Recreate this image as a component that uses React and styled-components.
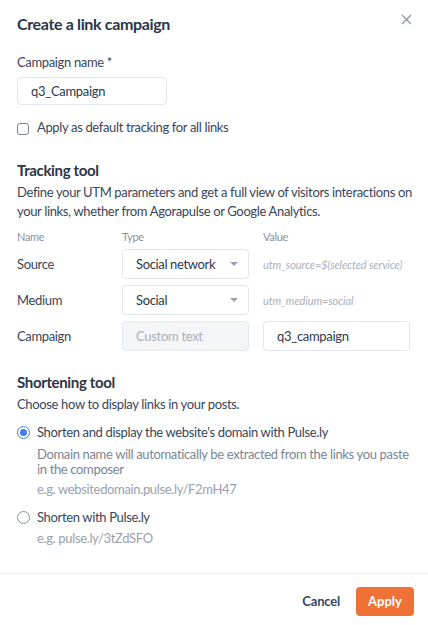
import React, { useState } from "react";
import styled, { createGlobalStyle } from "styled-components";

const GlobalStyle = createGlobalStyle`
  * { box-sizing: border-box; }
  body {
    margin: 0;
    background: #ffffff;
    font-family: Lato, "Open Sans", sans-serif;
    color: #3a4559;
    letter-spacing: -0.35px;
  }
`;

const Modal = styled.div`
  width: 428px;
  height: 625px;
  background: #fff;
  display: flex;
  flex-direction: column;
`;

const Body = styled.div`
  height: 573px;
  padding: 14px 6px 0 17px;
  display: flex;
  flex-direction: column;
`;

const HeaderRow = styled.div`
  display: flex;
  justify-content: space-between;
  align-items: flex-start;
`;

const Title = styled.h2`
  margin: 0;
  font-size: 16px;
  line-height: 20px;
  font-weight: 700;
  color: #2b3548;
`;

const CloseButton = styled.button`
  border: none;
  background: none;
  padding: 0;
  margin: 0 9px 0 0;
  width: 12px;
  height: 12px;
  cursor: pointer;
  display: flex;
`;

const Label = styled.label`
  display: block;
  font-size: 13px;
  line-height: 16px;
  color: #3a4559;
  margin: 20px 0 7px;
`;

const TextInput = styled.input`
  width: ${(p) => p.$width || "150px"};
  height: ${(p) => p.$height || "28px"};
  padding: 0 13px;
  border: 1px solid #e3e6eb;
  border-radius: 4px;
  font-family: inherit;
  font-size: 13px;
  letter-spacing: -0.3px;
  color: #2e384b;
  background: ${(p) => (p.disabled ? "#f4f5f7" : "#fff")};
  outline: none;

  &::placeholder {
    color: #a9afba;
  }
`;

const CheckRow = styled.label`
  display: flex;
  align-items: center;
  gap: 8px;
  font-size: 13px;
  line-height: 16px;
  margin-top: 14px;
`;

const Box = styled.span`
  width: 12px;
  height: 12px;
  border: 1px solid #7b8494;
  border-radius: 3px;
  margin-top: 3px;
`;

const SectionTitle = styled.h3`
  margin: ${(p) => p.$top || "26px"} 0 4px;
  font-size: 15px;
  line-height: 18px;
  font-weight: 700;
  color: #2b3548;
`;

const Text = styled.p`
  margin: 0;
  font-size: 13px;
  line-height: 19px;
  color: #3a4559;
`;

const Grid = styled.div`
  display: grid;
  grid-template-columns: 105px 141px 1fr;
  align-items: center;
  row-gap: 6px;
  margin-top: 9px;
`;

const ColHead = styled.div`
  font-size: 11px;
  line-height: 13px;
  color: #8a92a0;
`;

const RowName = styled.div`
  font-size: 13px;
  color: #3a4559;
`;

const Select = styled.div`
  width: 127px;
  height: 30px;
  border: 1px solid #e3e6eb;
  border-radius: 4px;
  display: flex;
  align-items: center;
  justify-content: space-between;
  padding: 0 10px 0 13px;
  font-size: 13px;
  color: #2e384b;
`;

const Caret = styled.span`
  width: 0;
  height: 0;
  border-left: 4px solid transparent;
  border-right: 4px solid transparent;
  border-top: 4px solid #9aa1ad;
`;

const Hint = styled.div`
  font-size: 11px;
  font-style: italic;
  letter-spacing: -0.1px;
  color: #a9afba;
  white-space: nowrap;
`;

const RadioRow = styled.label`
  display: flex;
  align-items: center;
  gap: 7px;
  font-size: 13px;
  line-height: 16px;
  color: #3a4559;
  margin-top: ${(p) => p.$top || "12px"};
`;

const Radio = styled.span`
  width: 13px;
  height: 13px;
  border-radius: 50%;
  border: 1px solid ${(p) => (p.$checked ? "#3b82f0" : "#8a92a0")};
  display: flex;
  align-items: center;
  justify-content: center;

  &::after {
    content: "";
    width: 7px;
    height: 7px;
    border-radius: 50%;
    background: ${(p) => (p.$checked ? "#3b82f0" : "transparent")};
  }
`;

const SubText = styled.p`
  margin: ${(p) => p.$top || "4px"} 10px 0 20px;
  font-size: 13px;
  line-height: 15px;
  color: ${(p) => p.$color || "#7b8494"};
`;

const Footer = styled.div`
  border-top: 1px solid #eef0f3;
  height: 52px;
  display: flex;
  align-items: center;
  justify-content: flex-end;
  gap: 16px;
  padding: 3px 14px 0 0;
`;

const CancelButton = styled.button`
  border: none;
  background: none;
  padding: 0;
  font-family: inherit;
  font-size: 13px;
  font-weight: 700;
  letter-spacing: -0.2px;
  color: #3a4559;
  cursor: pointer;
`;

const ApplyButton = styled.button`
  border: none;
  background: #f07136;
  color: #fff;
  font-family: inherit;
  font-size: 13px;
  font-weight: 700;
  width: 58px;
  height: 29px;
  border-radius: 4px;
  cursor: pointer;
`;

const App = () => {
  const [name, setName] = useState("q3_Campaign");
  const [value, setValue] = useState("q3_campaign");

  return (
    <>
      <GlobalStyle />
      <Modal>
        <Body>
          <HeaderRow>
            <Title>Create a link campaign</Title>
            <CloseButton aria-label="Close">
              <svg width="11" height="11" viewBox="0 0 11 11">
                <path d="M1 1L10 10M10 1L1 10" stroke="#8a92a0" strokeWidth="1.2" />
              </svg>
            </CloseButton>
          </HeaderRow>

          <Label>Campaign name *</Label>
          <TextInput value={name} onChange={(e) => setName(e.target.value)} />

          <CheckRow>
            <Box />
            Apply as default tracking for all links
          </CheckRow>

          <SectionTitle>Tracking tool</SectionTitle>
          <Text>
            Define your UTM parameters and get a full view of visitors interactions on
            your links, whether from Agorapulse or Google Analytics.
          </Text>

          <Grid>
            <ColHead>Name</ColHead>
            <ColHead>Type</ColHead>
            <ColHead>Value</ColHead>

            <RowName>Source</RowName>
            <Select>
              Social network <Caret />
            </Select>
            <Hint>utm_source=$(selected service)</Hint>

            <RowName>Medium</RowName>
            <Select>
              Social <Caret />
            </Select>
            <Hint>utm_medium=social</Hint>

            <RowName>Campaign</RowName>
            <TextInput $width="127px" $height="30px" disabled placeholder="Custom text" />
            <TextInput
              $width="147px"
              $height="30px"
              value={value}
              onChange={(e) => setValue(e.target.value)}
            />
          </Grid>

          <SectionTitle $top="22px">Shortening tool</SectionTitle>
          <Text>Choose how to display links in your posts.</Text>

          <RadioRow $top="10px">
            <Radio $checked />
            Shorten and display the website's domain with Pulse.ly
          </RadioRow>
          <SubText $top="7px">
            Domain name will automatically be extracted from the links you paste in the
            composer
          </SubText>
          <SubText $top="5px" $color="#9aa1ad">e.g. websitedomain.pulse.ly/F2mH47</SubText>

          <RadioRow $top="12px">
            <Radio />
            Shorten with Pulse.ly
          </RadioRow>
          <SubText $top="6px" $color="#9aa1ad">e.g. pulse.ly/3tZdSFO</SubText>
        </Body>

        <Footer>
          <CancelButton>Cancel</CancelButton>
          <ApplyButton>Apply</ApplyButton>
        </Footer>
      </Modal>
    </>
  );
};

export default App;
